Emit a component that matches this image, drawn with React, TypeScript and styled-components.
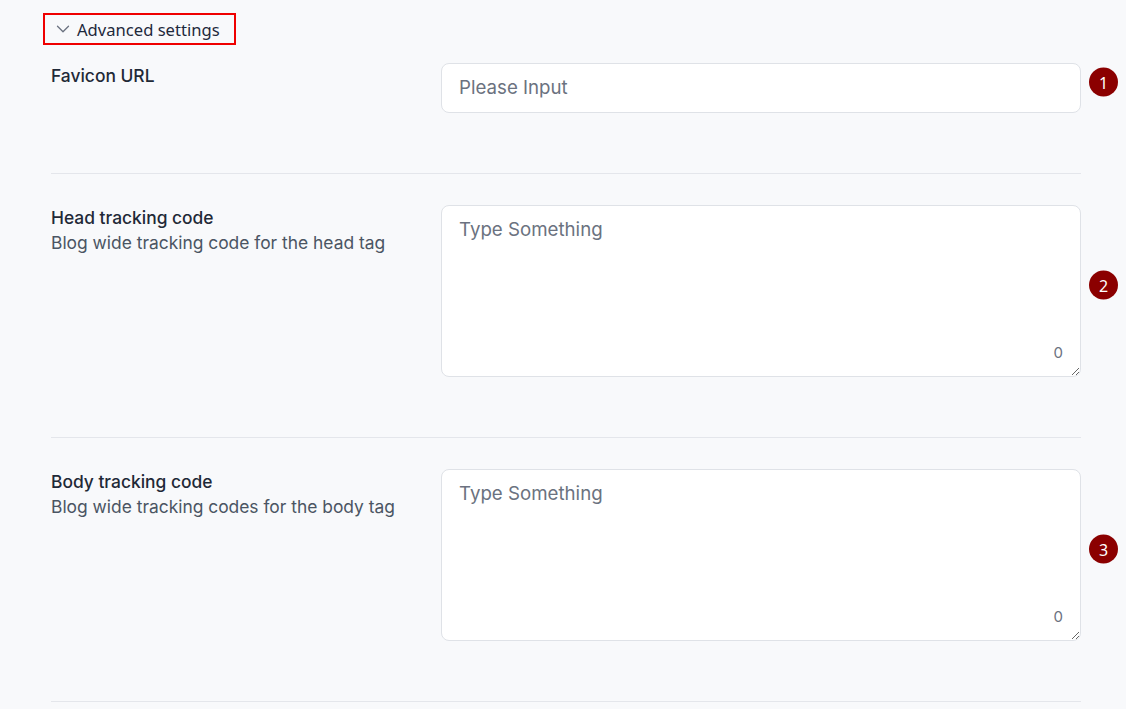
import React from 'react';
import styled, {createGlobalStyle} from 'styled-components';
import {ChevronDown} from 'lucide-react';

interface FieldRow {
  step: number;
  label: string;
  hint?: string;
  kind: 'input' | 'textarea';
  placeholder: string;
}

const rows: FieldRow[] = [
  {step: 1, label: 'Favicon URL', kind: 'input', placeholder: 'Please Input'},
  {
    step: 2,
    label: 'Head tracking code',
    hint: 'Blog wide tracking code for the head tag',
    kind: 'textarea',
    placeholder: 'Type Something',
  },
  {
    step: 3,
    label: 'Body tracking code',
    hint: 'Blog wide tracking codes for the body tag',
    kind: 'textarea',
    placeholder: 'Type Something',
  },
];

export default function App() {
  return (
    <Page>
      <GlobalStyle/>
      <Toggle>
        <ChevronDown size={22} strokeWidth={1.4} color="#6b7280"/>
        Advanced settings
      </Toggle>

      <Rows>
        {rows.map(row => (
          <Row key={row.step} first={row.step === 1}>
            <LabelCol>
              <Label>{row.label}</Label>
              {row.hint && <Hint>{row.hint}</Hint>}
            </LabelCol>

            <FieldCol>
              {row.kind === 'input' ?
                <Input placeholder={row.placeholder}/>
                :
                <AreaWrap>
                  <Area placeholder={row.placeholder}/>
                  <Counter>0</Counter>
                </AreaWrap>
              }
              <Badge>{row.step}</Badge>
            </FieldCol>
          </Row>
        ))}
      </Rows>
    </Page>
  );
}

const GlobalStyle = createGlobalStyle`
  html, body {
    margin: 0;
    background: #f8f9fb;
  }

  body {
    font-family: Inter, "Noto Sans", sans-serif;
  }
`;

const Page = styled.div`
  width: 1126px;
  height: 709px;
  overflow: hidden;
  box-sizing: border-box;
  padding: 13px 0 0 43px;
  background: #f8f9fb;
`;

const Toggle = styled.div`
  display: inline-flex;
  align-items: center;
  gap: 3px;
  box-sizing: border-box;
  height: 32px;
  padding: 0 14px 0 7px;
  border: 2px solid #ef0000;
  font-family: "Noto Sans", "Open Sans", sans-serif;
  font-size: 16.6px;
  color: #1e293b;
`;

const Rows = styled.div`
  display: flex;
  flex-direction: column;
  width: 1030px;
  margin: 18px 0 0 8px;
`;

const Row = styled.div<{first: boolean}>`
  display: grid;
  grid-template-columns: 390px 640px;
  padding: ${props => props.first ? '0' : '31px'} 0 60px;
  border-bottom: 1px solid #e4e6eb;
`;

const LabelCol = styled.div`
  display: flex;
  flex-direction: column;
`;

const Label = styled.div`
  font-size: 17.4px;
  line-height: 25px;
  font-weight: 500;
  color: #1f2937;
`;

const Hint = styled.div`
  font-size: 17.4px;
  line-height: 25px;
  color: #4b5563;
`;

const FieldCol = styled.div`
  position: relative;
`;

const fieldBase = `
  display: block;
  width: 100%;
  box-sizing: border-box;
  border: 1px solid #dfe2e7;
  border-radius: 8px;
  background: #fff;
  font-family: Inter, "Noto Sans", sans-serif;
  font-size: 18.7px;
  color: #1f2937;
  outline: none;

  &::placeholder {
    color: #6b7280;
  }
`;

const Input = styled.input`
  ${fieldBase}
  height: 50px;
  padding: 0 17px 2px;
`;

const AreaWrap = styled.div`
  position: relative;
`;

const Area = styled.textarea`
  ${fieldBase}
  height: 172px;
  padding: 12px 17px;
  resize: vertical;
  line-height: 24px;
`;

const Counter = styled.span`
  position: absolute;
  right: 18px;
  bottom: 15px;
  font-size: 15px;
  color: #6b7280;
`;

const Badge = styled.div`
  position: absolute;
  top: 50%;
  right: -37px;
  transform: translateY(calc(-50% - 6px));
  width: 29px;
  height: 29px;
  border-radius: 50%;
  background: #8b0000;
  color: #fff;
  display: flex;
  align-items: center;
  justify-content: center;
  font-family: "Noto Sans", sans-serif;
  font-size: 16px;
`;
